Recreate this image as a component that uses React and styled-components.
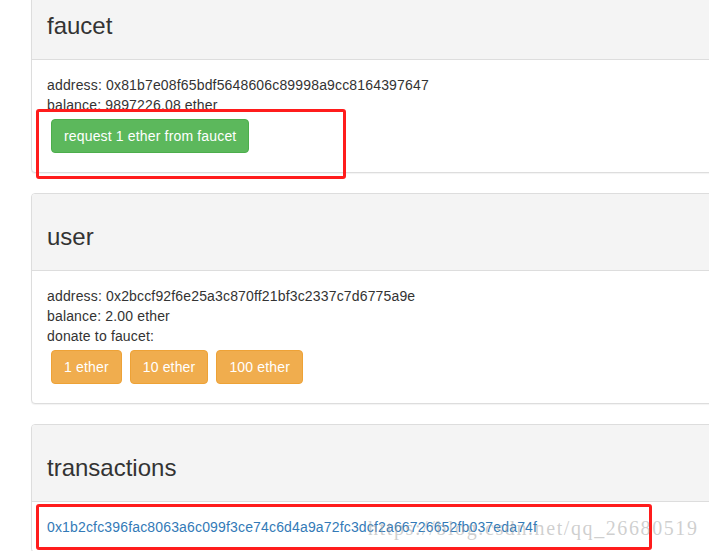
import React from 'react'
import styled, { createGlobalStyle } from 'styled-components'

const GlobalStyle = createGlobalStyle`
  html, body {
    margin: 0;
    padding: 0;
    background: #fff;
    overflow: hidden;
  }
  body {
    font-family: "Liberation Sans", Arial, sans-serif;
    font-size: 14px;
    line-height: 20px;
    color: #333;
  }
`

const Page = styled.div`
  position: relative;
  width: 709px;
  height: 551px;
  overflow: hidden;
`

const Column = styled.div`
  margin: -18px 0 0 31px;
  width: 760px;
`

const Panel = styled.div`
  background: #fff;
  border: 1px solid #ddd;
  border-radius: 4px;
  box-shadow: 0 1px 1px rgba(0, 0, 0, 0.05);
  margin-bottom: 20px;
`

const Heading = styled.div`
  background: #f4f4f4;
  border-bottom: 1px solid #ddd;
  border-radius: 3px 3px 0 0;
  padding: 10px 15px;
`

const Title = styled.h3`
  margin: 20px 0 10px;
  font-size: 24px;
  font-weight: 500;
  line-height: 26px;
  color: #333;
`

const Body = styled.div`
  padding: 15px;
  letter-spacing: 0.16px;
`

const Line = styled.div`
  height: 20px;
  white-space: nowrap;
`

const Buttons = styled.div`
  display: flex;
`

const Btn = styled.button`
  margin: 4px;
  padding: 6px 12px;
  font-family: inherit;
  font-size: 14px;
  line-height: 20px;
  letter-spacing: 0.16px;
  color: #fff;
  border-radius: 4px;
  cursor: pointer;
  background: ${p => (p.$kind === 'success' ? '#5cb85c' : '#f0ad4e')};
  border: 1px solid ${p => (p.$kind === 'success' ? '#4cae4c' : '#eea236')};
`

const TxLink = styled.a`
  color: #337ab7;
  text-decoration: none;
`

const Marker = styled.div`
  position: absolute;
  border: 3px solid #ff1c1c;
  border-radius: 3px;
  box-sizing: border-box;
  pointer-events: none;
`

const Watermark = styled.div`
  position: absolute;
  left: 368px;
  top: 518px;
  font-family: "Liberation Serif", "DejaVu Serif", serif;
  font-size: 20px;
  letter-spacing: 1.6px;
  color: rgba(160, 160, 160, 0.5);
  white-space: nowrap;
  pointer-events: none;
`

export default function App() {
  return (
    <Page>
      <GlobalStyle />
      <Column>
        <Panel>
          <Heading>
            <Title>faucet</Title>
          </Heading>
          <Body>
            <Line>address: 0x81b7e08f65bdf5648606c89998a9cc8164397647</Line>
            <Line>balance: 9897226.08 ether</Line>
            <Buttons>
              <Btn $kind="success">request 1 ether from faucet</Btn>
            </Buttons>
          </Body>
        </Panel>

        <Panel>
          <Heading>
            <Title>user</Title>
          </Heading>
          <Body>
            <Line>address: 0x2bccf92f6e25a3c870ff21bf3c2337c7d6775a9e</Line>
            <Line>balance: 2.00 ether</Line>
            <Line>donate to faucet:</Line>
            <Buttons>
              <Btn $kind="warning">1 ether</Btn>
              <Btn $kind="warning">10 ether</Btn>
              <Btn $kind="warning">100 ether</Btn>
            </Buttons>
          </Body>
        </Panel>

        <Panel>
          <Heading>
            <Title>transactions</Title>
          </Heading>
          <Body>
            <Line>
              <TxLink href="#">0x1b2cfc396fac8063a6c099f3ce74c6d4a9a72fc3dcf2a66726652fb037eda74f</TxLink>
            </Line>
          </Body>
        </Panel>
      </Column>

      <Marker style={{ left: 36, top: 109, width: 310, height: 70 }} />
      <Marker style={{ left: 36, top: 504, width: 616, height: 46 }} />
      <Watermark>https://blog.csdn.net/qq_26680519</Watermark>
    </Page>
  )
}
